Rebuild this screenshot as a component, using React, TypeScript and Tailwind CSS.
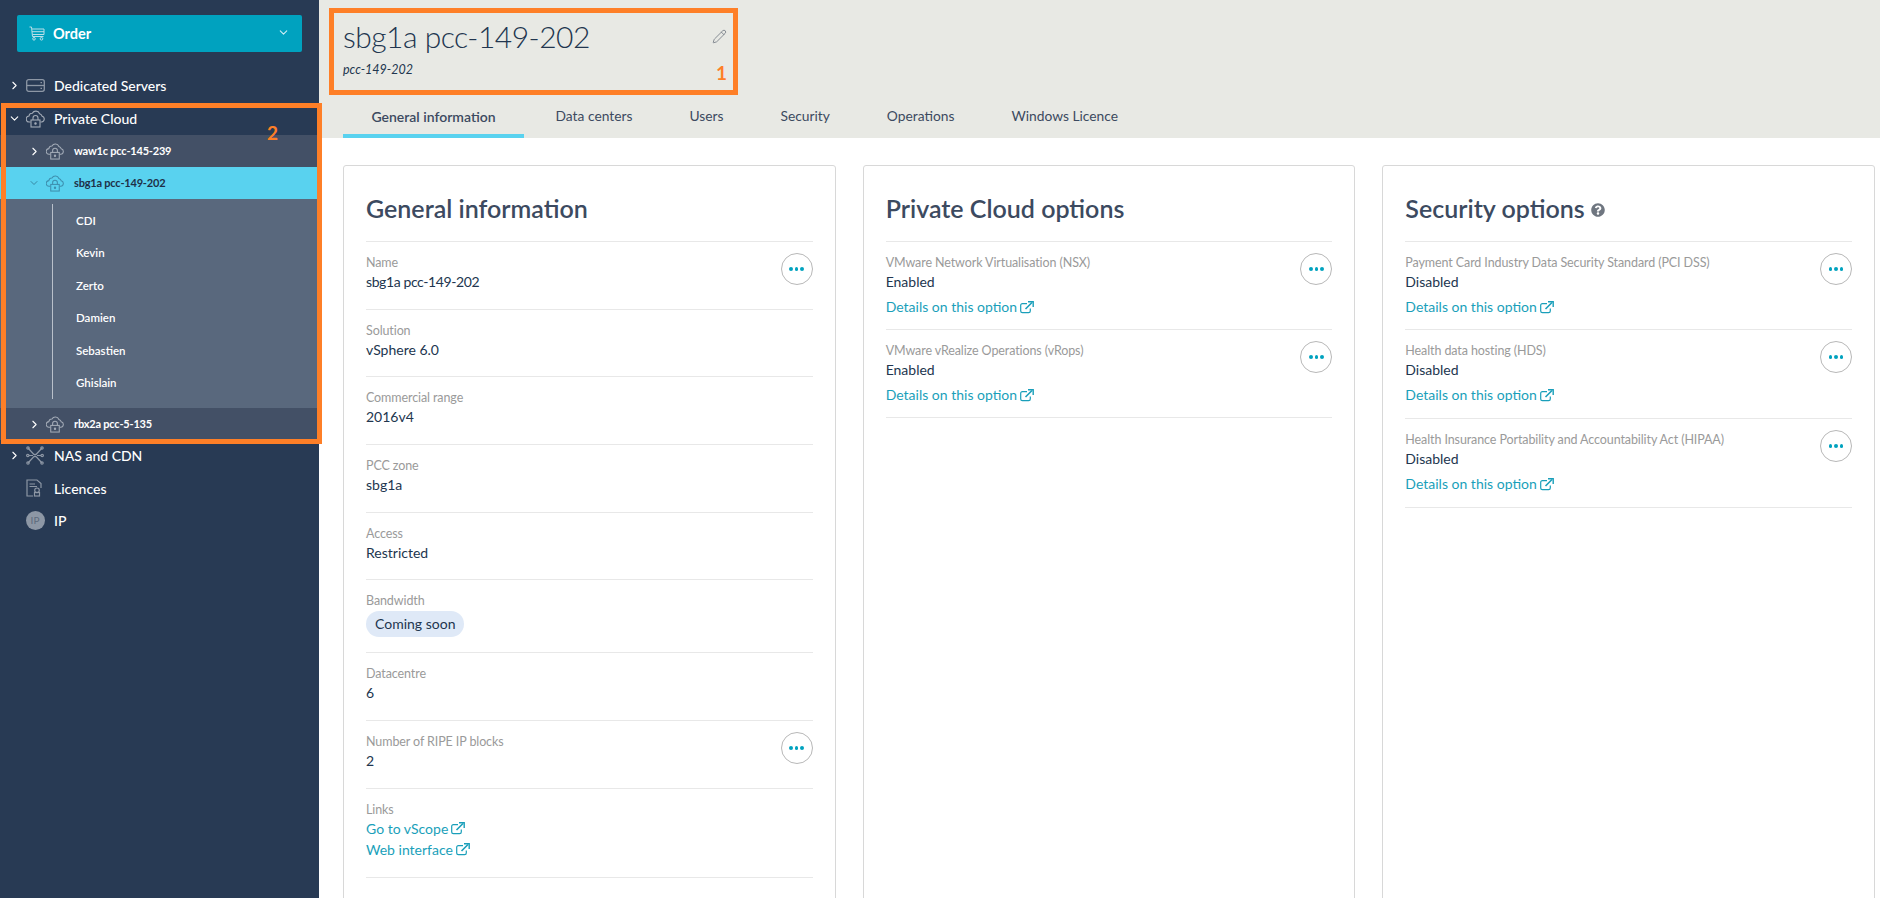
import { ChevronDown, ChevronRight, Pencil } from "lucide-react";
import { FaQuestionCircle } from "react-icons/fa";

function CartIcon() {
  return (
    <svg width="16" height="15" viewBox="0 0 16 15" fill="none" stroke="#b9dfe8" strokeWidth="1">
      <path d="M.5 1H2.5L3.5 10.5H14.5" />
      <path d="M3 3H15V8.5H3.5" />
      <path d="M3 5.7H15" />
      <circle cx="5" cy="12.8" r="1.3" />
      <circle cx="12.5" cy="12.8" r="1.3" />
    </svg>
  );
}

function ServerIcon() {
  return (
    <svg width="19" height="13" viewBox="0 0 19 13" fill="none" stroke="#8d97a5" strokeWidth="1.3">
      <rect x=".7" y=".7" width="17.6" height="11.6" rx="2" />
      <path d="M.7 6.5H18.3" />
      <path d="M14.5 3.6H16M14.5 9.4H16" />
    </svg>
  );
}

function CloudLockIcon({ size = 19, color = "#a3abb7" }: { size?: number; color?: string }) {
  return (
    <svg width={size} height={size} viewBox="0 0 19 19" fill="none" stroke={color} strokeWidth="1.1">
      <path d="M4.5 13H3.5A3 3 0 0 1 3 7 3.2 3.2 0 0 1 6.3 4.3 4 4 0 0 1 13.6 4.7 3.2 3.2 0 0 1 16 7.1 3 3 0 0 1 15.5 13H14.5" />
      <rect x="5" y="11" width="9" height="7" />
      <path d="M7 11V9A2.5 2.5 0 0 1 12 9V11" />
      <circle cx="9.5" cy="14.5" r=".7" fill={color} />
    </svg>
  );
}

function NetworkIcon() {
  return (
    <svg width="18" height="19" viewBox="0 0 18 19" fill="none" stroke="#8d97a5" strokeWidth="1.2">
      <path d="M2 2 7.5 8C8.3 8.9 9.7 8.9 10.5 8L16 2" />
      <path d="M2 17 7.5 11C8.3 10.1 9.7 10.1 10.5 11L16 17" />
      <path d="M3 9.5H7M11 9.5H15" />
      <circle cx="2" cy="2" r="1.2" />
      <circle cx="16" cy="2" r="1.2" />
      <circle cx="2" cy="17" r="1.2" />
      <circle cx="16" cy="17" r="1.2" />
      <circle cx="1.8" cy="9.5" r="1.2" />
      <circle cx="16.2" cy="9.5" r="1.2" />
    </svg>
  );
}

function LicenceIcon() {
  return (
    <svg width="16" height="18" viewBox="0 0 16 18" fill="none" stroke="#8d97a5" strokeWidth="1.2">
      <path d="M7 17H1V1H11L15 4.5V9" />
      <path d="M3.5 5H9M3.5 7.5H11" strokeWidth="1" />
      <circle cx="11" cy="11.3" r="2.3" />
      <rect x="8.5" y="13.5" width="5" height="3.5" />
    </svg>
  );
}

function ExternalIcon() {
  return (
    <svg width="14" height="13" viewBox="0 0 14 13" fill="none" stroke="#1a9fba" strokeWidth="1.2" className="ml-[3px] inline-block align-baseline">
      <path d="M7 2.6H2.4C1.4 2.6.7 3.3.7 4.3V10C.7 11 1.4 11.7 2.4 11.7H8.6C9.6 11.7 10.3 11 10.3 10V7.5" />
      <path d="M5.5 8 12 1.5" strokeWidth="1.6" />
      <path d="M8 .8H13.2V6" strokeWidth="1.4" />
    </svg>
  );
}

function MoreButton() {
  return (
    <button className="flex h-8 w-8 shrink-0 items-center justify-center gap-[2px] rounded-full border border-[#b8b8b8] bg-white">
      <span className="h-[3.5px] w-[3.5px] rounded-full bg-[#00a2bf]" />
      <span className="h-[3.5px] w-[3.5px] rounded-full bg-[#00a2bf]" />
      <span className="h-[3.5px] w-[3.5px] rounded-full bg-[#00a2bf]" />
    </button>
  );
}

function NavRow({ label, icon, open, arrow = true }: { label: string; icon: React.ReactNode; open?: boolean; arrow?: boolean }) {
  return (
    <div className="flex h-[32.5px] items-center pb-[1px] pl-[8px] text-[14px] font-medium text-white">
      <span className="flex w-[17px] justify-start">
        {arrow && (open ? <ChevronDown size={13} strokeWidth={2} /> : <ChevronRight size={13} strokeWidth={2} />)}
      </span>
      <span className="flex w-[29px] justify-start pl-[0.5px]">{icon}</span>
      <span>{label}</span>
    </div>
  );
}

function CloudRow({ label, open, active }: { label: string; open?: boolean; active?: boolean }) {
  return (
    <div className={active ? "flex h-8 items-center bg-[#59d2ef] pl-7 text-[11px] font-bold tracking-[-0.2px] text-[#1e3048]" : "flex h-8 items-center bg-[#435066] pl-7 text-[11px] font-bold tracking-[-0.2px] text-white"}>
      <span className="w-[18px]">
        {open ? <ChevronDown size={12} strokeWidth={1.5} className="text-[#2c6f8a]" /> : <ChevronRight size={13} strokeWidth={2} />}
      </span>
      <span className="w-7">
        <CloudLockIcon size={18} color={active ? "#3d8fae" : "#a3abb7"} />
      </span>
      <span>{label}</span>
    </div>
  );
}

function InfoRow({ label, value, more, className = "h-[67.7px]" }: { label: string; value: React.ReactNode; more?: boolean; className?: string }) {
  return (
    <div className={`flex justify-between border-b border-[#e8e8e8] pt-[11px] ${className}`}>
      <div>
        <div className="text-[12.5px] leading-[19px] tracking-[-0.1px] text-[#9a9a9a]">{label}</div>
        <div className="text-[14px] leading-[19px] text-[#22364f]">{value}</div>
      </div>
      {more && <MoreButton />}
    </div>
  );
}

function DetailLink({ label }: { label: string }) {
  return (
    <a className="flex items-center text-[14px] leading-[20px] text-[#1a9fba]">
      {label}
      <ExternalIcon />
    </a>
  );
}

function OptionRow({ label, className = "h-[88px]" }: { label: string; className?: string }) {
  return (
    <div className={`flex justify-between border-b border-[#e8e8e8] pt-[11px] ${className}`}>
      <div>
        <div className="text-[12.5px] leading-[19px] tracking-[-0.1px] text-[#9a9a9a]">{label}</div>
        <div className="text-[14px] leading-[19px] text-[#22364f]">{label.startsWith("VMware") ? "Enabled" : "Disabled"}</div>
        <div className="mt-[6px]">
          <DetailLink label="Details on this option" />
        </div>
      </div>
      <MoreButton />
    </div>
  );
}

function Card({ title, children }: { title: React.ReactNode; children: React.ReactNode }) {
  return (
    <section className="min-w-0 flex-1 rounded-t-[3px] border border-[#d8d8d8] bg-white px-[22px] pb-10">
      <h2 className="flex h-[76px] items-center border-b border-[#e8e8e8] pt-[10px] text-[25px] font-semibold text-[#3c4a60]">{title}</h2>
      {children}
    </section>
  );
}

const tabs = ["Data centers", "Users", "Security", "Operations", "Windows Licence"];

export default function App() {
  return (
    <div className="relative flex h-screen overflow-hidden bg-white font-[Lato,sans-serif]">
      <aside className="w-[319px] shrink-0 bg-[#283a54]">
        <div className="px-[17px] pt-[15px]">
          <button className="flex h-[37px] w-full items-center justify-between rounded-[2px] bg-[#00a2bf] pl-3 pr-3 text-[14.5px] font-bold text-white">
            <span className="flex items-center gap-[8px]">
              <CartIcon />
              Order
            </span>
            <ChevronDown size={13} className="-mt-[3px] text-[#cfeef5]" />
          </button>
        </div>
        <nav className="mt-[18px]">
          <NavRow label="Dedicated Servers" icon={<ServerIcon />} />
          <NavRow label="Private Cloud" icon={<CloudLockIcon />} open />
          <CloudRow label="waw1c pcc-145-239" />
          <CloudRow label="sbg1a pcc-149-202" open active />
          <div className="h-[209px] bg-[#59687d] pl-[52px] pt-[5px]">
            <div className="h-[195px] border-l border-[#b9c0ca] pl-[23px] text-[11.5px] font-semibold text-white">
              {["CDI", "Kevin", "Zerto", "Damien", "Sebastien", "Ghislain"].map((name) => (
                <div key={name} className="flex h-[32.5px] items-center">
                  {name}
                </div>
              ))}
            </div>
          </div>
          <CloudRow label="rbx2a pcc-5-135" />
          <NavRow label="NAS and CDN" icon={<NetworkIcon />} />
          <NavRow label="Licences" icon={<LicenceIcon />} arrow={false} />
          <NavRow
            label="IP"
            arrow={false}
            icon={
              <span className="flex h-[19px] w-[19px] items-center justify-center rounded-full bg-[#8d97a5] text-[10px] font-normal text-[#5e6b7d]">
                IP
              </span>
            }
          />
        </nav>
      </aside>

      <main className="min-w-0 flex-1">
        <header className="h-[138px] bg-[#e8e9e4] pl-[24px]">
          <div className="flex h-[96px] w-[384px] flex-col">
            <div className="flex items-center justify-between pt-[13px]">
              <h1 className="text-[30px] font-light leading-[46px] tracking-[-0.5px] text-[#22364f]">sbg1a pcc-149-202</h1>
              <Pencil size={15} strokeWidth={1.3} className="text-[#6f7680]" />
            </div>
            <div className="mt-[2px] text-[12.5px] italic text-[#22364f]">pcc-149-202</div>
          </div>
          <div className="flex h-[42px]">
            <div className="mr-[3px] flex h-[42px] w-[181px] items-center justify-center border-b-4 border-[#59d2ef] pt-[2px] text-[14px] font-semibold text-[#3c4a60]">
              General information
            </div>
            {tabs.map((tab) => (
              <div key={tab} className="flex h-[42px] items-center px-[28.5px] pb-[2px] text-[13.8px] text-[#3c4a60]">
                {tab}
              </div>
            ))}
          </div>
        </header>

        <div className="flex gap-[27px] pl-[24px] pr-[5px] pt-[27px]">
          <Card title="General information">
            <InfoRow label="Name" value={<span className="tracking-[-0.4px]">sbg1a pcc-149-202</span>} more />
            <InfoRow label="Solution" value="vSphere 6.0" />
            <InfoRow label="Commercial range" value="2016v4" />
            <InfoRow label="PCC zone" value="sbg1a" />
            <InfoRow label="Access" value="Restricted" />
            <InfoRow
              label="Bandwidth"
              className="h-[73px]"
              value={<span className="mt-[1px] inline-block h-[26px] rounded-full bg-[#dfe9f7] px-[9px] leading-[26px]">Coming soon</span>}
            />
            <InfoRow label="Datacentre" value="6" />
            <InfoRow label="Number of RIPE IP blocks" value="2" more />
            <InfoRow
              label="Links"
              className="h-[89px]"
              value={
                <div className="flex flex-col gap-[1px]">
                  <DetailLink label="Go to vScope" />
                  <DetailLink label="Web interface" />
                </div>
              }
            />
          </Card>
          <Card title="Private Cloud options">
            <OptionRow label="VMware Network Virtualisation (NSX)" />
            <OptionRow label="VMware vRealize Operations (vRops)" />
          </Card>
          <Card
            title={
              <>
                Security options
                <FaQuestionCircle size={14} className="ml-[6px] mt-[3px] text-[#6f7680]" />
              </>
            }
          >
            <OptionRow label="Payment Card Industry Data Security Standard (PCI DSS)" />
            <OptionRow label="Health data hosting (HDS)" className="h-[89px]" />
            <OptionRow label="Health Insurance Portability and Accountability Act (HIPAA)" className="h-[89px]" />
          </Card>
        </div>
      </main>

      {/* annotation boxes drawn over the screenshot */}
      <div className="pointer-events-none absolute left-[1px] top-[103px] h-[341px] w-[321px] border-[5px] border-[#fe7f27]" />
      <div className="pointer-events-none absolute left-[329px] top-[8px] h-[87px] w-[409px] border-[5px] border-[#fe7f27]" />
      <span className="absolute left-[267px] top-[122px] text-[19px] font-bold leading-[22px] text-[#fe7f27]">2</span>
      <span className="absolute left-[716px] top-[62px] text-[19px] font-bold leading-[22px] text-[#fe7f27]">1</span>
    </div>
  );
}
